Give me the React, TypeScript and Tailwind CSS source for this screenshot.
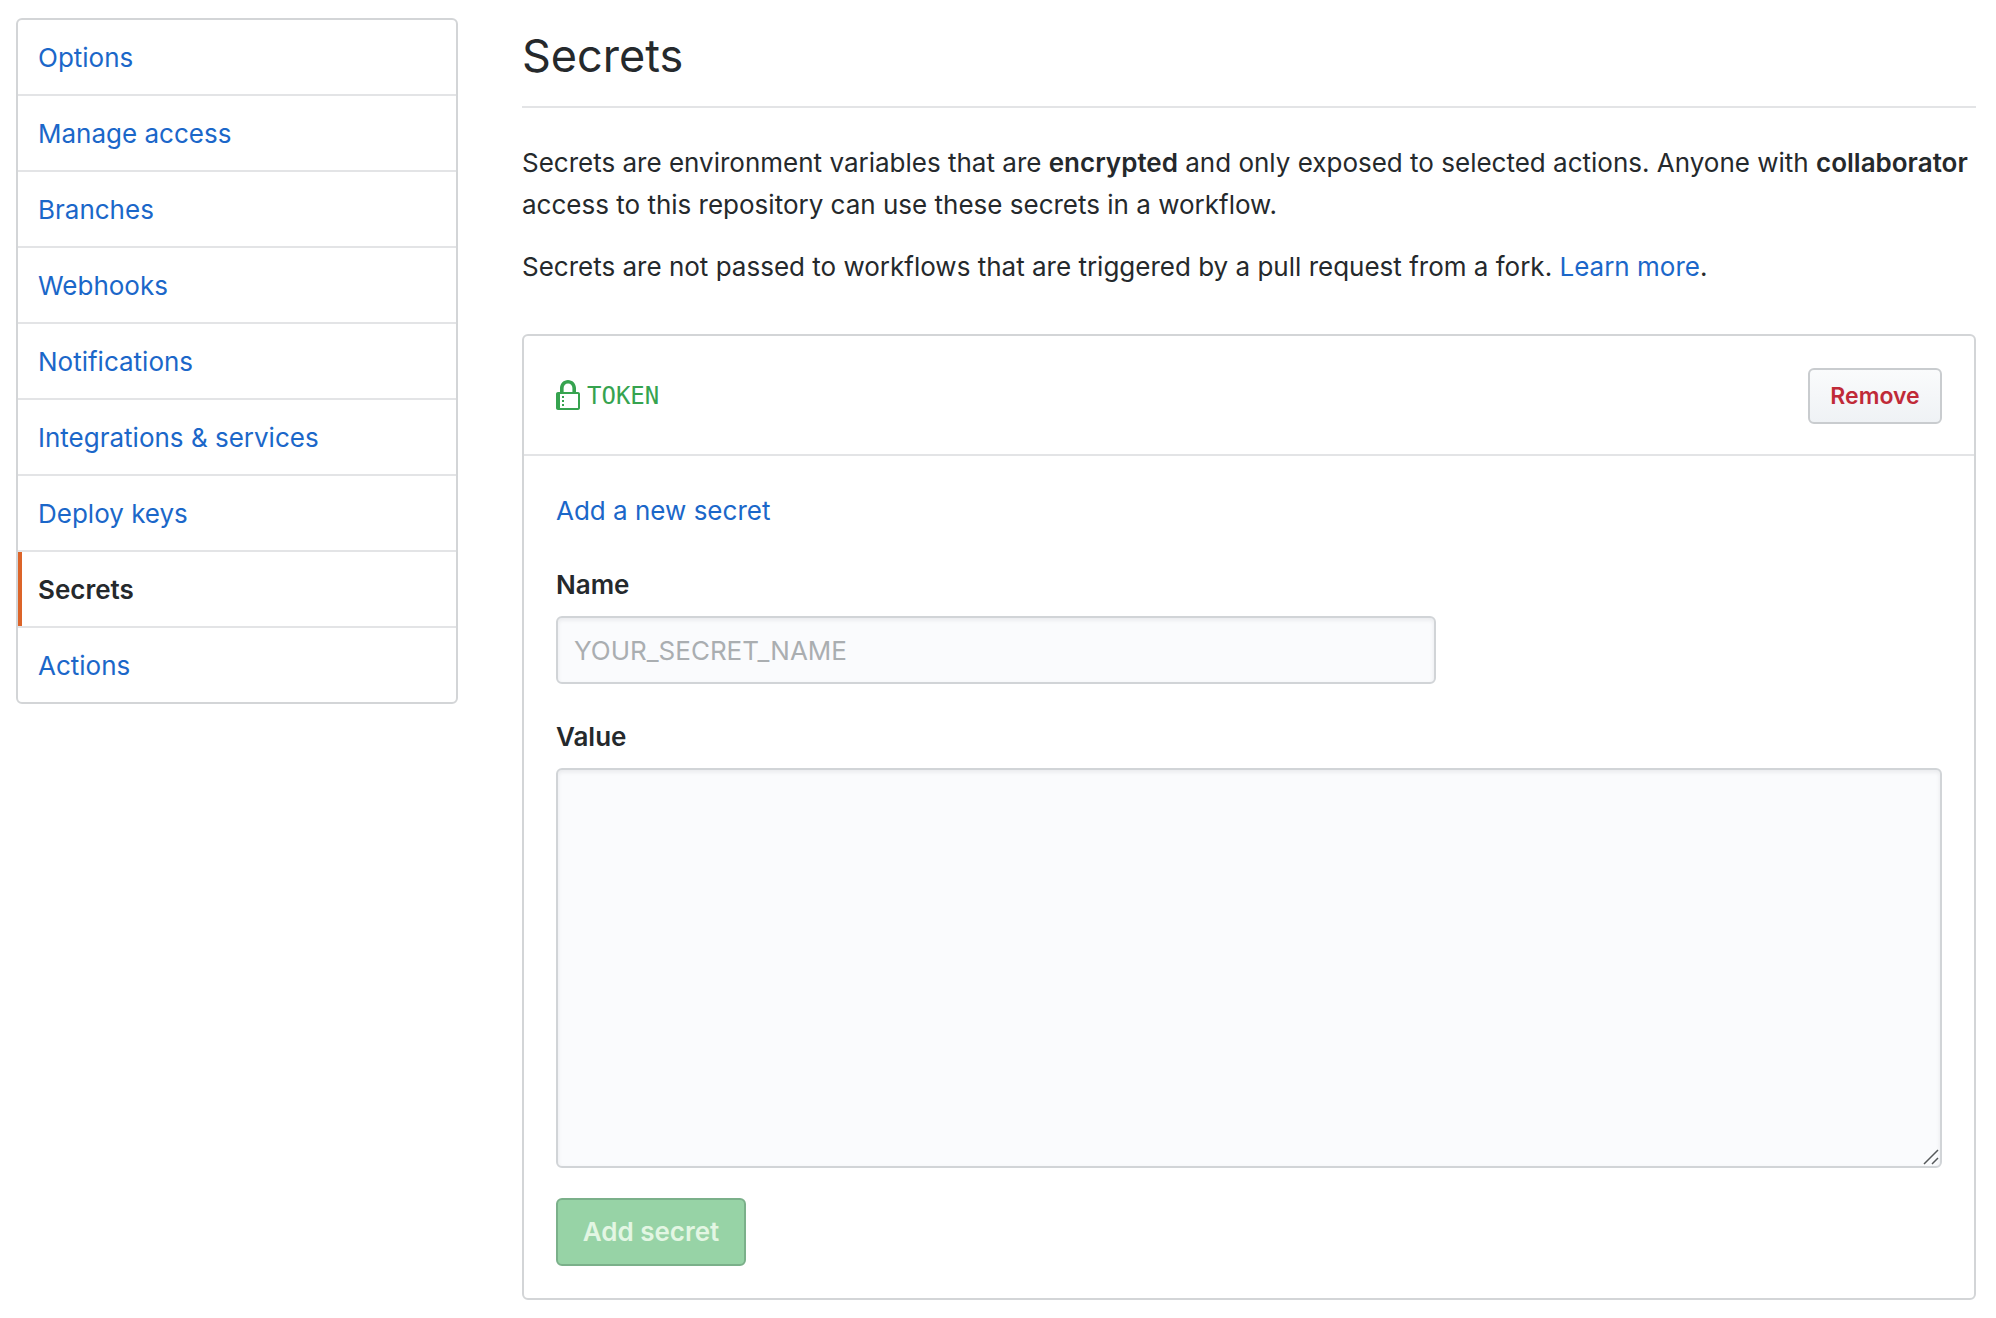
import clsx from "clsx";

const MENU = [
  "Options",
  "Manage access",
  "Branches",
  "Webhooks",
  "Notifications",
  "Integrations & services",
  "Deploy keys",
  "Secrets",
  "Actions",
];

const ACTIVE = "Secrets";

const fieldClass =
  "block rounded-md border-2 border-[#d1d4d7] bg-[#fafbfd] px-4 text-[#25292c] placeholder:text-[#aaaeb1] shadow-[inset_0_2px_4px_rgba(27,31,35,0.08)] outline-none";

function LockIcon() {
  return (
    <svg viewBox="0 0 12 16" className="h-8 w-6 shrink-0" fill="currentColor" aria-hidden="true">
      <path
        fillRule="evenodd"
        d="M4 13H3v-1h1v1zm8-6v7c0 .55-.45 1-1 1H1c-.55 0-1-.45-1-1V7c0-.55.45-1 1-1h1V4c0-2.2 1.8-4 4-4s4 1.8 4 4v2h1c.55 0 1 .45 1 1zM3.8 6h4.41V4c0-1.22-.98-2.2-2.2-2.2-1.22 0-2.2.98-2.2 2.2v2H3.8zM11 7H2v7h9V7zM4 8H3v1h1V8zm0 2H3v1h1v-1z"
      />
    </svg>
  );
}

function SettingsMenu() {
  return (
    <nav aria-label="Settings" className="w-[442px] shrink-0 overflow-hidden rounded-md border-2 border-[#d3d5d7]">
      <ul>
        {MENU.map((item) => (
          <li key={item} className="border-b-2 border-[#e3e4e6] last:border-b-0">
            <a
              href="#"
              aria-current={item === ACTIVE ? "page" : undefined}
              className={clsx(
                "block border-l-4 pt-[17px] pr-5 pb-[15px] pl-4",
                item === ACTIVE
                  ? "border-[#dc6429] font-semibold text-[#25292c]"
                  : "border-transparent text-[#1b67c9]"
              )}
            >
              {item}
            </a>
          </li>
        ))}
      </ul>
    </nav>
  );
}

function SecretForm() {
  return (
    <form className="px-8 pt-[34px] pb-8" onSubmit={(e) => e.preventDefault()}>
      <a href="#" className="text-[#1b67c9]">
        Add a new secret
      </a>

      <label htmlFor="secret-name" className="mt-8 mb-2.5 block font-semibold">
        Name
      </label>
      <input
        id="secret-name"
        type="text"
        placeholder="YOUR_SECRET_NAME"
        className={clsx(fieldClass, "h-17 w-full max-w-[880px]")}
      />

      <label htmlFor="secret-value" className="mt-8 mb-2.5 block font-semibold">
        Value
      </label>
      <div className="relative">
        <textarea id="secret-value" className={clsx(fieldClass, "h-100 w-full resize-none py-3")} />
        {/* resize grip */}
        <svg
          viewBox="0 0 16 16"
          className="pointer-events-none absolute right-[3px] bottom-[3px] h-4 w-4"
          stroke="#55585a"
          strokeWidth="1.5"
          aria-hidden="true"
        >
          <path d="M1 15L15 1M9 15l6-6" />
        </svg>
      </div>

      <button
        type="submit"
        disabled
        className="mt-[30px] block h-17 w-[190px] rounded-md border-2 border-[#7bb08a] bg-[#97d3a6] font-semibold text-[#e3f6e3]"
      >
        Add secret
      </button>
    </form>
  );
}

export default function App() {
  return (
    <div className="flex items-start gap-16 bg-white py-[18px] pr-5 pl-4 font-['Inter','Liberation_Sans',sans-serif] text-[26px] leading-[42px] text-[#25292c]">
      <SettingsMenu />

      <main className="min-w-0 flex-1">
        <h1 className="mb-[34px] border-b-2 border-[#e3e4e6] pt-0.5 pb-3.5 text-[45px] leading-[72px]">Secrets</h1>

        <p className="mb-5">
          Secrets are environment variables that are <strong className="font-semibold">encrypted</strong> and only
          exposed to selected actions. Anyone with <strong className="font-semibold">collaborator</strong> access to
          this repository can use these secrets in a workflow.
        </p>
        <p className="mb-[46px]">
          Secrets are not passed to workflows that are triggered by a pull request from a fork.{" "}
          <a href="#" className="text-[#1b67c9]">
            Learn more
          </a>
          .
        </p>

        <section className="rounded-md border-2 border-[#d3d5d7]">
          <div className="flex items-center justify-between border-b-2 border-[#e3e4e6] px-8 pt-8 pb-[30px]">
            <div className="flex items-center gap-[7px] text-[#36a34f]">
              <LockIcon />
              <code className="font-['DejaVu_Sans_Mono',monospace] text-[24px]">TOKEN</code>
            </div>
            <button
              type="button"
              className="h-14 w-[134px] rounded-md border-2 border-[#c9cccf] bg-linear-to-b from-[#fafbfc] to-[#eff2f5] text-[23px] leading-[40px] font-semibold text-[#c02a38]"
            >
              Remove
            </button>
          </div>

          <SecretForm />
        </section>
      </main>
    </div>
  );
}
